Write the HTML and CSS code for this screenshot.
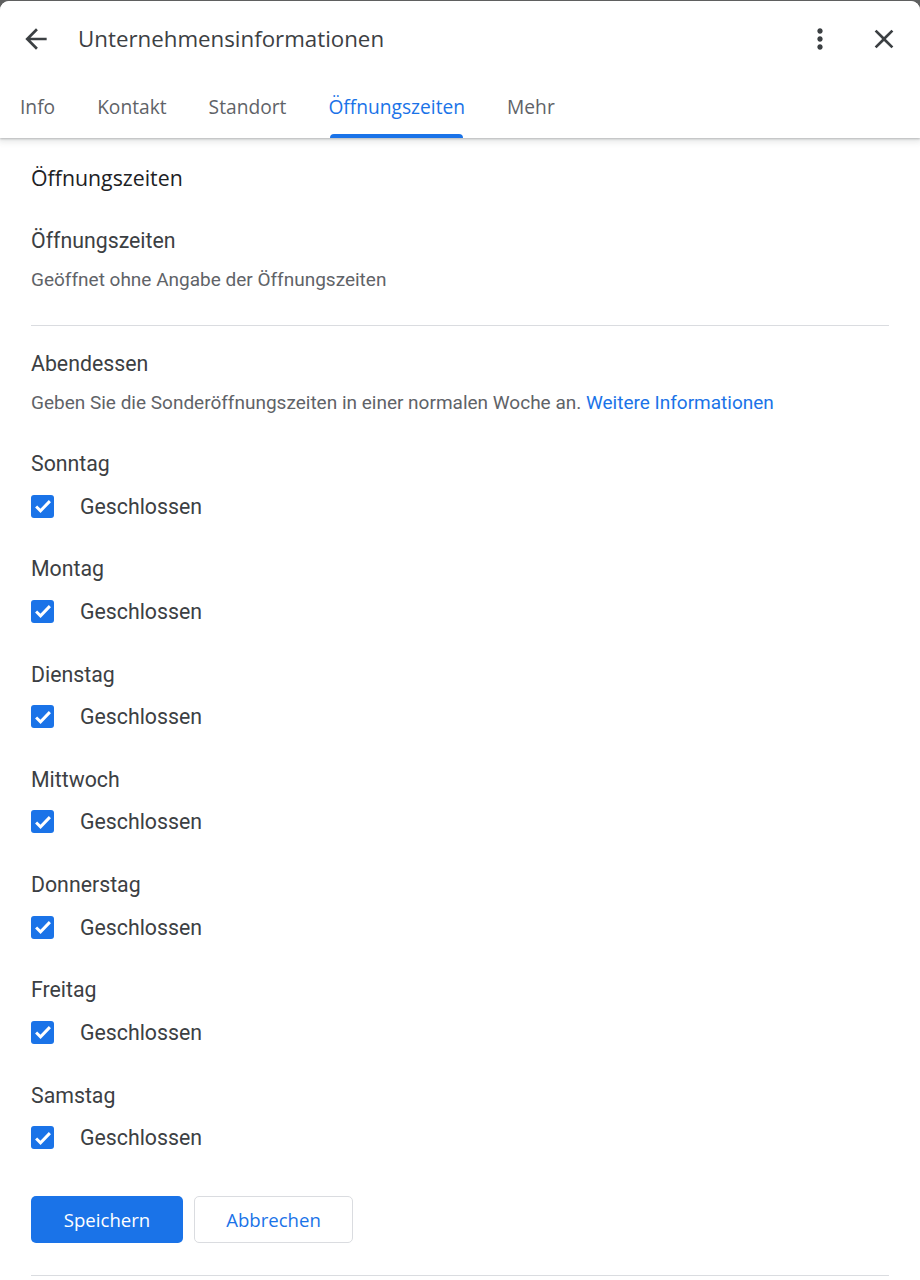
FILE: index.html
```html
<!DOCTYPE html>
<html lang="de">
<head>
<meta charset="utf-8">
<title>Unternehmensinformationen</title>
<link rel="stylesheet" href="styles.css">
</head>
<body>
<div class="card">
  <header class="header">
    <div class="topbar">
      <button class="icon-btn back" aria-label="Zurück">
        <svg viewBox="0 0 24 24" width="32" height="32"><path d="M20 11H7.83l5.59-5.59L12 4l-8 8 8 8 1.41-1.41L7.83 13H20v-2z"/></svg>
      </button>
      <h1 class="title">Unternehmensinformationen</h1>
      <button class="icon-btn more" aria-label="Mehr">
        <svg viewBox="0 0 24 24" width="32" height="32"><path d="M12 8c1.1 0 2-.9 2-2s-.9-2-2-2-2 .9-2 2 .9 2 2 2zm0 2c-1.1 0-2 .9-2 2s.9 2 2 2 2-.9 2-2-.9-2-2-2zm0 6c-1.1 0-2 .9-2 2s.9 2 2 2 2-.9 2-2-.9-2-2-2z"/></svg>
      </button>
      <button class="icon-btn close" aria-label="Schließen">
        <svg viewBox="0 0 24 24" width="32" height="32"><path d="M19 6.41L17.59 5 12 10.59 6.41 5 5 6.41 10.59 12 5 17.59 6.41 19 12 13.41 17.59 19 19 17.59 13.41 12z"/></svg>
      </button>
    </div>
    <nav class="tabs">
      <a class="tab">Info</a>
      <a class="tab">Kontakt</a>
      <a class="tab">Standort</a>
      <a class="tab active">Öffnungszeiten</a>
      <a class="tab">Mehr</a>
    </nav>
  </header>

  <main class="content">
    <h2 class="section-title">Öffnungszeiten</h2>
    <div class="label first-label">Öffnungszeiten</div>
    <div class="desc">Geöffnet ohne Angabe der Öffnungszeiten</div>
    <hr class="divider">
    <div class="label">Abendessen</div>
    <div class="desc">Geben Sie die Sonderöffnungszeiten in einer normalen Woche an. <a class="link">Weitere Informationen</a></div>

    <div class="days">
      <div class="day">
        <div class="label">Sonntag</div>
        <label class="check-row"><span class="checkbox"><svg viewBox="0 0 24 24" width="22" height="22"><path d="M4.5 12.5l4.8 4.8 10.2-10.6" /></svg></span><span class="check-label">Geschlossen</span></label>
      </div>
      <div class="day">
        <div class="label">Montag</div>
        <label class="check-row"><span class="checkbox"><svg viewBox="0 0 24 24" width="22" height="22"><path d="M4.5 12.5l4.8 4.8 10.2-10.6" /></svg></span><span class="check-label">Geschlossen</span></label>
      </div>
      <div class="day">
        <div class="label">Dienstag</div>
        <label class="check-row"><span class="checkbox"><svg viewBox="0 0 24 24" width="22" height="22"><path d="M4.5 12.5l4.8 4.8 10.2-10.6" /></svg></span><span class="check-label">Geschlossen</span></label>
      </div>
      <div class="day">
        <div class="label">Mittwoch</div>
        <label class="check-row"><span class="checkbox"><svg viewBox="0 0 24 24" width="22" height="22"><path d="M4.5 12.5l4.8 4.8 10.2-10.6" /></svg></span><span class="check-label">Geschlossen</span></label>
      </div>
      <div class="day">
        <div class="label">Donnerstag</div>
        <label class="check-row"><span class="checkbox"><svg viewBox="0 0 24 24" width="22" height="22"><path d="M4.5 12.5l4.8 4.8 10.2-10.6" /></svg></span><span class="check-label">Geschlossen</span></label>
      </div>
      <div class="day">
        <div class="label">Freitag</div>
        <label class="check-row"><span class="checkbox"><svg viewBox="0 0 24 24" width="22" height="22"><path d="M4.5 12.5l4.8 4.8 10.2-10.6" /></svg></span><span class="check-label">Geschlossen</span></label>
      </div>
      <div class="day">
        <div class="label">Samstag</div>
        <label class="check-row"><span class="checkbox"><svg viewBox="0 0 24 24" width="22" height="22"><path d="M4.5 12.5l4.8 4.8 10.2-10.6" /></svg></span><span class="check-label">Geschlossen</span></label>
      </div>
    </div>

    <div class="actions">
      <button class="btn btn-primary">Speichern</button>
      <button class="btn btn-outline">Abbrechen</button>
    </div>
    <hr class="divider bottom-divider">
  </main>
</div>
</body>
</html>
```

FILE: styles.css
```css
* { box-sizing: border-box; }

html, body {
  margin: 0;
  padding: 0;
}

body {
  background: #5f6060;
  padding-top: 1px;
  font-family: Roboto, "Liberation Sans", Arial, sans-serif;
  color: #3c4043;
}

.card {
  background: #fff;
  border-radius: 9px 9px 0 0;
  min-height: 1279px;
  overflow: hidden;
}

.header {
  position: relative;
  z-index: 1;
  background: #fff;
  box-shadow: 0 1px 2px rgba(60, 64, 67, 0.3), 0 2px 6px 2px rgba(60, 64, 67, 0.12);
}

.topbar {
  display: flex;
  align-items: center;
  height: 75px;
  padding: 0 20px;
}

.icon-btn {
  display: flex;
  align-items: center;
  justify-content: center;
  width: 32px;
  height: 32px;
  padding: 0;
  border: 0;
  background: none;
  fill: #3c4043;
}

.title {
  flex: 1;
  margin: 0 0 0 26px;
  font-family: "Open Sans", Roboto, sans-serif;
  font-weight: 400;
  font-size: 22.3px;
  color: #3c4043;
  letter-spacing: 0;
}

.more { margin-right: 32px; }

.tabs {
  display: flex;
  gap: 42px;
  height: 62px;
  padding-left: 20px;
}

.tab {
  position: relative;
  display: flex;
  align-items: center;
  font-family: "Open Sans", Roboto, sans-serif;
  font-weight: 500;
  font-size: 19.2px;
  color: #5f6368;
  padding-bottom: 2px;
}

.tab.active { color: #1a73e8; }

.tab.active::after {
  content: "";
  position: absolute;
  left: 2px;
  right: 2px;
  bottom: 0;
  height: 4px;
  background: #1a73e8;
  border-radius: 4px 4px 0 0;
}

.content {
  padding: 26px 31px 0;
}

.section-title {
  margin: 0;
  font-family: "Open Sans", Roboto, sans-serif;
  font-weight: 400;
  font-size: 21.3px;
  line-height: 28px;
  color: #202124;
}

.label {
  font-size: 21.3px;
  line-height: 28px;
  color: #3c4043;
}

.first-label { margin-top: 35px; }

.desc {
  margin-top: 12px;
  font-size: 19px;
  line-height: 26px;
  color: #5f6368;
}

.link { color: #1a73e8; text-decoration: none; }

.divider {
  margin: 32px 0 0;
  border: 0;
  border-top: 1.5px solid #dadce0;
  height: 0;
}

.divider + .label { margin-top: 24px; }

.days {
  display: flex;
  flex-direction: column;
  gap: 35.3px;
  margin-top: 34px;
}

.check-row {
  display: flex;
  align-items: center;
  gap: 26px;
  margin-top: 14px;
  height: 28px;
}

.checkbox {
  display: flex;
  align-items: center;
  justify-content: center;
  width: 23px;
  height: 23px;
  border-radius: 3px;
  background: #1a73e8;
}

.checkbox svg {
  fill: none;
  stroke: #fff;
  stroke-width: 3.2;
}

.check-label {
  font-size: 21.3px;
  color: #3c4043;
}

.actions {
  display: flex;
  gap: 11px;
  margin-top: 44px;
}

.btn {
  height: 47px;
  border-radius: 5px;
  font-family: "Open Sans", Roboto, sans-serif;
  font-weight: 500;
  font-size: 18.6px;
  cursor: pointer;
}

.btn-primary {
  width: 152px;
  background: #1a73e8;
  border: 0;
  color: #fff;
}

.btn-outline {
  width: 159px;
  background: #fff;
  border: 1.5px solid #dadce0;
  color: #1a73e8;
}

.bottom-divider { margin-top: 32px; }
```
